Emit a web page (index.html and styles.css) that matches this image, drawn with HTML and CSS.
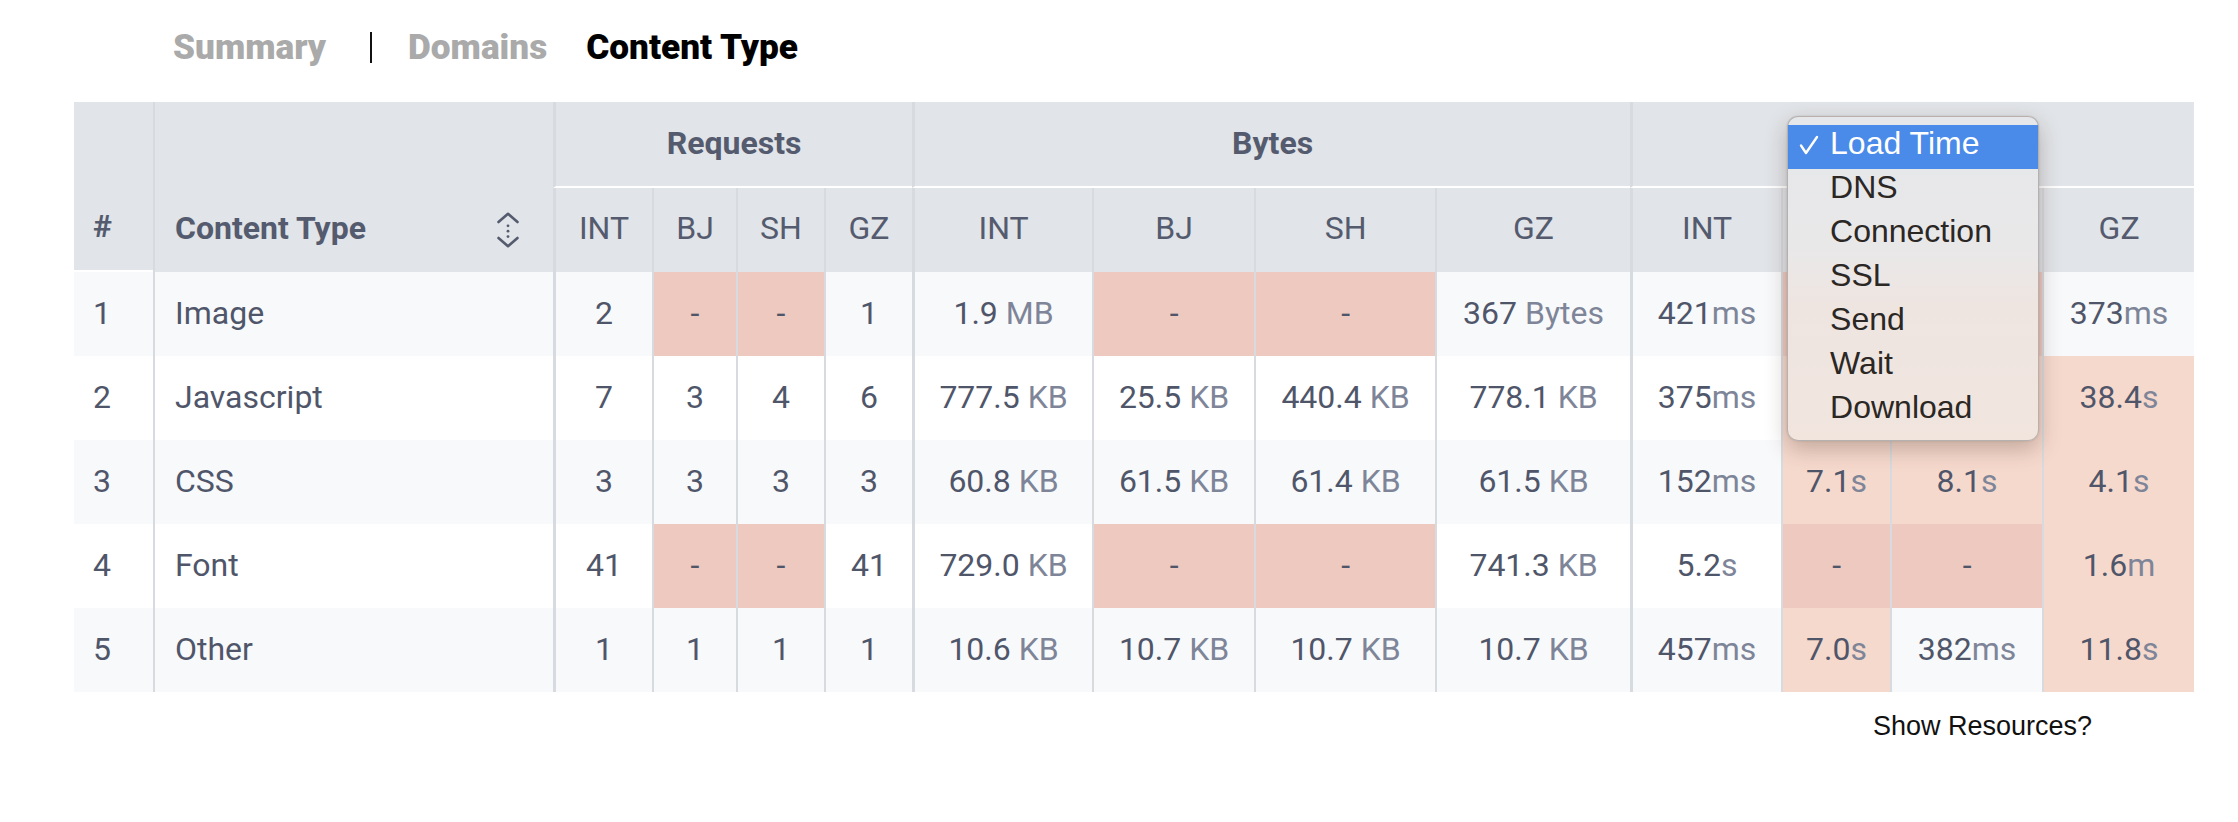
FILE: index.html
```html
<!DOCTYPE html>
<html>
<head>
<meta charset="utf-8">
<title>Content Type</title>
<link rel="stylesheet" href="styles.css">
</head>
<body>
<div class="page">
  <nav class="tabs">
    <span class="tab tab-summary">Summary</span>
    <span class="tab-sep"></span>
    <span class="tab tab-domains">Domains</span>
    <span class="tab tab-active">Content Type</span>
  </nav>

  <table class="grid">
    <colgroup>
      <col class="c-num"><col class="c-name">
      <col class="c-r1"><col class="c-r2"><col class="c-r3"><col class="c-r4">
      <col class="c-b1"><col class="c-b2"><col class="c-b3"><col class="c-b4">
      <col class="c-l1"><col class="c-l2"><col class="c-l3"><col class="c-l4">
    </colgroup>
    <thead>
      <tr class="grp-row">
        <th rowspan="2" class="h-num"><div class="h-inner">#</div></th>
        <th rowspan="2" class="h-name">
          <div class="h-inner h-name-inner">
            <span>Content Type</span>
            <svg class="sort" width="22" height="36" viewBox="0 0 22 36">
              <polyline points="1.5,10 11,1.8 20.5,10" fill="none" stroke="#555b6e" stroke-width="2.6" stroke-linecap="round" stroke-linejoin="round"/>
              <circle cx="11" cy="13.8" r="1.4" fill="#555b6e"/>
              <circle cx="11" cy="19.2" r="1.4" fill="#555b6e"/>
              <circle cx="11" cy="24.6" r="1.4" fill="#555b6e"/>
              <polyline points="1.5,26 11,34.2 20.5,26" fill="none" stroke="#555b6e" stroke-width="2.6" stroke-linecap="round" stroke-linejoin="round"/>
            </svg>
          </div>
        </th>
        <th colspan="4" class="grp">Requests</th>
        <th colspan="4" class="grp">Bytes</th>
        <th colspan="4" class="grp grp-load">
          <span class="sel-value">Load Time</span>
          <div class="menu">
            <div class="menu-item is-selected">
              <svg class="check" width="20" height="20" viewBox="0 0 20 20"><polyline points="2,10.5 7,18 18,2" fill="none" stroke="#fff" stroke-width="2.4" stroke-linecap="round" stroke-linejoin="round"/></svg>
              Load Time
            </div>
            <div class="menu-item">DNS</div>
            <div class="menu-item">Connection</div>
            <div class="menu-item">SSL</div>
            <div class="menu-item">Send</div>
            <div class="menu-item">Wait</div>
            <div class="menu-item">Download</div>
          </div>
        </th>
      </tr>
      <tr class="sub">
        <th>INT</th><th>BJ</th><th>SH</th><th>GZ</th>
        <th>INT</th><th>BJ</th><th>SH</th><th>GZ</th>
        <th>INT</th><th>BJ</th><th>SH</th><th>GZ</th>
      </tr>
    </thead>
    <tbody>
      <tr>
        <td>1</td><td>Image</td>
        <td>2</td><td class="miss">-</td><td class="miss">-</td><td>1</td>
        <td>1.9 <span class="u">MB</span></td><td class="miss">-</td><td class="miss">-</td><td>367 <span class="u">Bytes</span></td>
        <td>421<span class="u">ms</span></td><td class="miss">-</td><td class="miss">-</td><td>373<span class="u">ms</span></td>
      </tr>
      <tr>
        <td>2</td><td>Javascript</td>
        <td>7</td><td>3</td><td>4</td><td>6</td>
        <td>777.5 <span class="u">KB</span></td><td>25.5 <span class="u">KB</span></td><td>440.4 <span class="u">KB</span></td><td>778.1 <span class="u">KB</span></td>
        <td>375<span class="u">ms</span></td><td class="slow">6.9<span class="u">s</span></td><td class="slow">7.4<span class="u">s</span></td><td class="slow">38.4<span class="u">s</span></td>
      </tr>
      <tr>
        <td>3</td><td>CSS</td>
        <td>3</td><td>3</td><td>3</td><td>3</td>
        <td>60.8 <span class="u">KB</span></td><td>61.5 <span class="u">KB</span></td><td>61.4 <span class="u">KB</span></td><td>61.5 <span class="u">KB</span></td>
        <td>152<span class="u">ms</span></td><td class="slow">7.1<span class="u">s</span></td><td class="slow">8.1<span class="u">s</span></td><td class="slow">4.1<span class="u">s</span></td>
      </tr>
      <tr>
        <td>4</td><td>Font</td>
        <td>41</td><td class="miss">-</td><td class="miss">-</td><td>41</td>
        <td>729.0 <span class="u">KB</span></td><td class="miss">-</td><td class="miss">-</td><td>741.3 <span class="u">KB</span></td>
        <td>5.2<span class="u">s</span></td><td class="miss">-</td><td class="miss">-</td><td class="slow">1.6<span class="u">m</span></td>
      </tr>
      <tr>
        <td>5</td><td>Other</td>
        <td>1</td><td>1</td><td>1</td><td>1</td>
        <td>10.6 <span class="u">KB</span></td><td>10.7 <span class="u">KB</span></td><td>10.7 <span class="u">KB</span></td><td>10.7 <span class="u">KB</span></td>
        <td>457<span class="u">ms</span></td><td class="slow">7.0<span class="u">s</span></td><td>382<span class="u">ms</span></td><td class="slow">11.8<span class="u">s</span></td>
      </tr>
    </tbody>
  </table>

  <div class="foot">Show Resources?</div>
</div>
</body>
</html>
```

FILE: styles.css
```css
* { box-sizing: border-box; }

body {
  margin: 0;
  background: #ffffff;
  font-family: Roboto, "Liberation Sans", sans-serif;
}

.page {
  padding: 0 44px 0 74px;
}

/* ---------- tabs ---------- */
.tabs {
  height: 94px;
  margin-bottom: 8px;
  padding-left: 99px;
  display: flex;
  align-items: center;
  font-family: Roboto, "Liberation Sans", sans-serif;
  font-weight: 900;
  font-size: 35.2px;
}
.tab { color: #aaaaaa; }
.tab-active { color: #000000; }
.tab-sep {
  width: 2px;
  height: 31px;
  background: #111111;
  margin: 0 36px 0 44px;
}
.tab-domains { margin-right: 39px; }

/* ---------- table ---------- */
.grid {
  width: 100%;
  table-layout: fixed;
  border-collapse: separate;
  border-spacing: 0;
  font-size: 32px;
  color: #50566a;
}
.c-num { width: 79px; }
.c-name { width: 400px; }
.c-r1 { width: 99px; }
.c-r2 { width: 84px; }
.c-r3 { width: 88px; }
.c-r4 { width: 88px; }
.c-b1 { width: 180px; }
.c-b2 { width: 162px; }
.c-b3 { width: 181px; }
.c-b4 { width: 195px; }
.c-l1 { width: 151px; }
.c-l2 { width: 109px; }
.c-l3 { width: 152px; }
.c-l4 { width: 152px; }

.grid th,
.grid td {
  padding: 0 0 3px 0;
  text-align: center;
  vertical-align: middle;
  white-space: nowrap;
}

.grid thead th {
  background: #e1e4e8;
  color: #555b6e;
}

.grp-row { height: 86px; }
.grp {
  font-weight: 700;
  border-left: 3px solid #d7dade;
  border-bottom: 2px solid #ffffff;
}
.grp-load { position: relative; }
.sel-value { visibility: hidden; }

.h-num,
.h-name {
  vertical-align: bottom !important;
  text-align: left !important;
  font-weight: 700;
}
.h-num {
  padding: 0 0 0 19px !important;
  border-bottom: 2px solid #ffffff;
}
.h-name {
  border-left: 2px solid #d7dade;
  padding: 0 34px 0 20px !important;
}
.h-inner {
  height: 89px;
  display: flex;
  align-items: center;
}
.h-name-inner { justify-content: space-between; }
.sort { display: block; margin-top: 4px; }

.sub { height: 84px; }
.sub th {
  font-weight: 400;
  border-left: 2px solid #d7dade;
  padding-bottom: 5px !important;
}
.sub th:nth-child(1),
.sub th:nth-child(5),
.sub th:nth-child(9) { border-left-width: 3px; }

.grid tbody tr { height: 84px; background: #ffffff; }
.grid tbody tr:nth-child(odd) { background: #f8f9fb; }
.grid tbody td:nth-child(n+2) { border-left: 2px solid #d7dade; }
.grid tbody td:nth-child(3),
.grid tbody td:nth-child(7),
.grid tbody td:nth-child(11) { border-left-width: 3px; }
.grid tbody td:nth-child(1) { text-align: left; padding-left: 19px; }
.grid tbody td:nth-child(2) { text-align: left; padding-left: 20px; }

.u { color: #7e8598; }
.miss { background: #eec9c0; }
.slow { background: #f6d9cd; }

/* ---------- native-looking select menu ---------- */
.menu {
  position: absolute;
  z-index: 10;
  left: 154px;
  top: 14px;
  width: 252px;
  padding: 8px 0 7px;
  border: 1px solid rgba(120, 110, 108, 0.45);
  border-radius: 11px;
  background: linear-gradient(180deg, #e5e7ea 0%, #e9e8e9 40%, #eee5e1 58%, #f1e5de 100%);
  box-shadow: 0 8px 22px rgba(60, 40, 30, 0.28), 0 0 2px rgba(0, 0, 0, 0.15);
  font-family: "Liberation Sans", Arial, sans-serif;
  font-size: 32px;
  font-weight: 400;
  color: #2b2724;
  text-align: left;
}
.menu-item {
  position: relative;
  height: 44px;
  line-height: 37px;
  padding-left: 42px;
}
.menu-item.is-selected {
  background: #4a8ae9;
  color: #ffffff;
}
.check {
  position: absolute;
  left: 11px;
  top: 10px;
}

/* ---------- footer ---------- */
.foot {
  margin-top: 17px;
  padding-right: 102px;
  text-align: right;
  font-family: "Liberation Sans", Arial, sans-serif;
  font-size: 27px;
  line-height: 34px;
  color: #111111;
}
```
